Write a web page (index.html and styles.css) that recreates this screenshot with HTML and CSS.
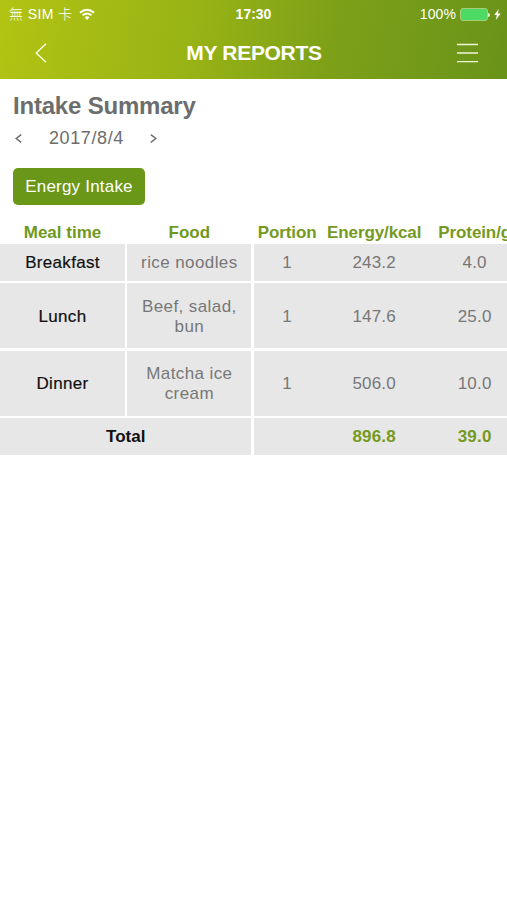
FILE: index.html
```
<!DOCTYPE html>
<html lang="en">
<head>
    <meta charset="UTF-8">
    <title>My Reports</title>
    <meta name="viewport" content="width=device-width, initial-scale=1">
    <link rel="stylesheet" href="styles.css">
</head>
<body>
<header>
    <div class="status">
        <div class="carrier">
            <span class="sim">無 SIM 卡</span>
            <svg width="16" height="13" viewBox="0 0 16 13" fill="none" stroke="#fff" stroke-width="1.9">
                <path d="M1 4.8Q8-1.3 15 4.8M3.5 7.3Q8 3.5 12.5 7.3"/>
                <path d="M5.5 9.3Q8 7.2 10.5 9.3L8 12Z" fill="#fff" stroke="none"/>
            </svg>
        </div>
        <span class="time">17:30</span>
        <div class="power">
            <span class="percent">100%</span>
            <span class="battery"></span>
            <svg width="7" height="11" viewBox="0 0 7 11"><path d="M4.7 0L.3 6h2.5L1.8 11 6.7 4.5H4Z" fill="#fff"/></svg>
        </div>
    </div>
    <nav>
        <a href="#" class="back" aria-label="Back"><svg width="12" height="20" viewBox="0 0 12 20"><path d="M11 .8L1.2 10 11 19.2" fill="none" stroke="#fff" stroke-width="1.2"/></svg></a>
        <h1>MY REPORTS</h1>
        <a href="#" class="menu" aria-label="Menu"><svg width="21" height="20" viewBox="0 0 21 20"><path d="M0 1.5h21M0 10h21M0 18.7h21" stroke="#eef5d9" stroke-width="1.3"/></svg></a>
    </nav>
</header>
<main>
    <section class="summary">
        <h2>Intake Summary</h2>
        <div class="date">
            <svg width="7" height="9" viewBox="0 0 7 9"><path d="M6.2.7L1.2 4.5 6.2 8.3"/></svg>
            <span>2017/8/4</span>
            <svg width="7" height="9" viewBox="0 0 7 9"><path d="M.8.7L5.8 4.5.8 8.3"/></svg>
        </div>
        <button>Energy Intake</button>
    </section>
    <div class="report">
        <div class="row head">
            <div class="cell">Meal time</div>
            <div class="cell">Food</div>
            <div class="values"><span class="portion">Portion</span><span class="energy">Energy/kcal</span><span class="protein">Protein/g</span></div>
        </div>
        <div class="row">
            <div class="cell meal">Breakfast</div>
            <div class="cell food">rice noodles</div>
            <div class="values"><span>1</span><span>243.2</span><span>4.0</span></div>
        </div>
        <div class="row tall">
            <div class="cell meal">Lunch</div>
            <div class="cell food">Beef, salad,<br>bun</div>
            <div class="values"><span>1</span><span>147.6</span><span>25.0</span></div>
        </div>
        <div class="row tall">
            <div class="cell meal">Dinner</div>
            <div class="cell food">Matcha ice<br>cream</div>
            <div class="values"><span>1</span><span>506.0</span><span>10.0</span></div>
        </div>
        <div class="row total">
            <div class="cell label">Total</div>
            <div class="values"><span></span><span>896.8</span><span>39.0</span></div>
        </div>
    </div>
</main>
</body>
</html>
```
FILE: styles.css
```
* { box-sizing: border-box; }
body { margin: 0; background: #fff; color: #6d6d6d; font-family: "Liberation Sans", "Noto Sans CJK TC", Arial, sans-serif; overflow-x: hidden; }
header { height: 79px; color: #fff; background: linear-gradient(100deg, #b2c413 0%, #98b315 38%, #7da018 65%, #699319 100%); }
.status { height: 27px; padding: 0 6px 0 9px; display: grid; grid-template-columns: 1fr auto 1fr; align-items: center; font-size: 14px; line-height: 27px; }
.carrier, .power { display: flex; align-items: center; }
.carrier { gap: 7px; }
.power { justify-content: flex-end; }
.sim { font-weight: 300; letter-spacing: 0.4px; }
.time { padding-top: 1px; margin-left: -3px; font-weight: bold; }
.percent { margin-right: 4px; padding-top: 1px; letter-spacing: 0.1px; }
.battery { width: 28px; height: 13px; margin-right: 6px; border: 1px solid #a8cf78; border-radius: 3px; background: #4cd964; position: relative; }
.battery::after { content: ""; position: absolute; right: -3px; top: 4px; width: 2px; height: 4px; border-radius: 0 2px 2px 0; background: #e4efcf; }
nav { height: 52px; padding: 0 29px 0 35px; display: grid; grid-template-columns: 1fr auto 1fr; align-items: center; }
nav svg { display: block; }
.menu { justify-self: end; }
h1 { margin: 0 2px 0 -3px; font-size: 21px; line-height: 52px; letter-spacing: -0.3px; }

.summary { height: 141px; padding: 13px 13px 0; }
h2 { margin: 0; font-size: 24px; line-height: 28px; letter-spacing: -0.2px; }
.date { height: 36px; padding-left: 2px; display: flex; align-items: center; font-size: 18px; letter-spacing: 0.6px; }
.date span { margin: 0 26px 0 27px; }
.date svg { fill: none; stroke: #6d6d6d; stroke-width: 1.5; }
button { display: block; width: 132px; height: 37px; margin-top: 12px; padding: 1px 0 0; border: none; border-radius: 5px; background: #6b9719; color: #fff; font-family: inherit; font-size: 17px; letter-spacing: 0.2px; }

.report { display: flex; flex-direction: column; gap: 2.4px; font-size: 17px; line-height: 20px; }
.row { height: 36.8px; display: grid; grid-template-columns: 125px 124.3px 253.5px; column-gap: 2.2px; }
.cell, .values { padding-top: 2px; background: #e7e7e7; align-items: center; }
.cell { display: flex; justify-content: center; text-align: center; }
.values { display: grid; grid-template-columns: 67px 107px 94px; justify-items: center; overflow: hidden; white-space: nowrap; }
.head { height: 24px; margin-bottom: -2.4px; color: #6f991c; font-weight: bold; }
.head .cell, .head .values { background: none; }
.head .values { letter-spacing: -0.1px; }
.tall { height: 65px; }
.meal { color: #111; letter-spacing: 0.3px; -webkit-text-stroke: 0.2px #111; }
.food, .values { color: #777; letter-spacing: 0.4px; }
.values { letter-spacing: 0.2px; }
.head .values, .total .values { color: #759a22; font-weight: bold; }
.label { grid-column: span 2; color: #111; font-weight: bold; }
```
